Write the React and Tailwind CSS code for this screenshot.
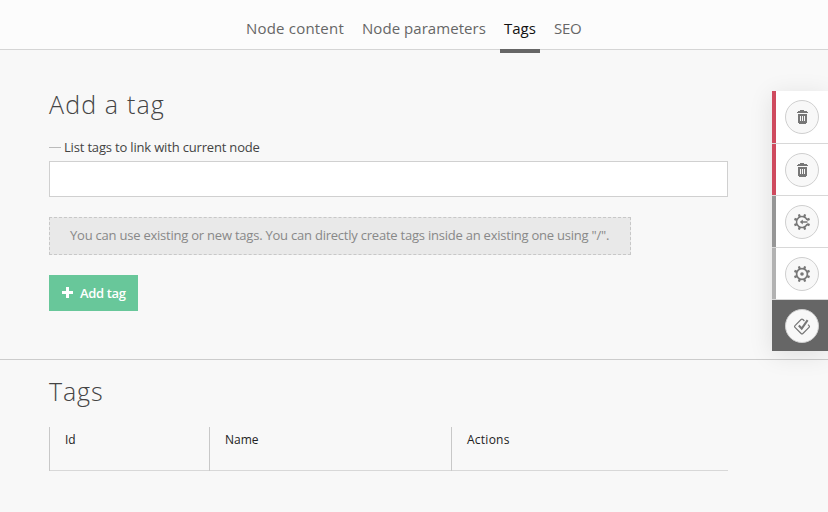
const teeth = [22.5, 67.5, 112.5, 157.5, 202.5, 247.5, 292.5, 337.5];

function Trash() {
  return (
    <svg width="12" height="14" viewBox="0 0 12 14" fill="#777" shapeRendering="crispEdges">
      <path d="M4 0h4v1h2.500v1H11.500v1H.5V2H1.500V1H4zM1.500 4h9v9h-1v1h-7v-1h-1z" />
      <path d="M4 6h1v5h-1zM6 6h1v5h-1zM8 6h1v5h-1z" fill="#f8f8f8" />
    </svg>
  );
}

function Gear({ arrow }) {
  return (
    <svg width="18" height="18" viewBox="0 0 18 18" fill="none" stroke="#777">
      {arrow ? (
        <path d="M14.100 6.900A5.500 5.500 0 1 0 14.100 11.100" strokeWidth="1.500" />
      ) : (
        <circle cx="9" cy="9" r="5.400" strokeWidth="1.700" />
      )}
      {teeth.map((a) => (
        <path key={a} d="M7.800 3.500L7.900 .8h2.200l.1 2.700z" fill="#777" stroke="none" transform={`rotate(${a} 9 9)`} />
      ))}
      {arrow ? (
        <path d="M6.800 9l3-2.400v1.700h4.700v1.400h-4.700v1.700z" fill="#777" stroke="none" />
      ) : (
        <circle cx="9" cy="9" r="1.800" fill="#777" stroke="none" />
      )}
    </svg>
  );
}

function Check() {
  return (
    <svg width="18" height="18" viewBox="0 0 18 18" fill="none" stroke="#777">
      <path d="M11.400 4L9.900 2.500a1.300 1.300 0 0 0-1.800 0L2 8.600a1.300 1.300 0 0 0 0 1.800l6.100 6.100a1.300 1.300 0 0 0 1.800 0l6.100-6.100a1.300 1.300 0 0 0 0-1.800l-1-1" strokeWidth="1.200" />
      <path d="M5.800 8.600l2.900 3 5.900-8.400" strokeWidth="2.100" />
    </svg>
  );
}

const Action = ({ children, className }) => (
  <button className={`flex w-full items-start pl-[9px] pt-[9px] border-l-4 ${className}`}>
    <span className="flex size-[34px] items-center justify-center rounded-full border border-[#cfcfcf] bg-[#f8f8f8]">{children}</span>
  </button>
);

export default function App() {
  return (
    <div className="relative flex h-[512px] w-[828px] flex-col overflow-hidden bg-[#f8f8f8] font-['Open_Sans',sans-serif] text-[#444]">
      <nav className="flex h-[50px] shrink-0 border-b border-[#d5d5d5] bg-[#fcfcfc] pl-[246px] text-[15px] leading-[20px] text-[#666]">
        <a className="mr-[18px] w-[98px] whitespace-nowrap pt-[18px] tracking-[0.2px]">Node content</a>
        <a className="mr-[14px] w-[124px] whitespace-nowrap pt-[18px] tracking-[0.05px]">Node parameters</a>
        <a className="mr-[14px] h-[53px] w-[40px] whitespace-nowrap border-b-4 border-[#666] pl-[4px] pt-[18px] text-[#111]">Tags</a>
        <a className="whitespace-nowrap pt-[18px] tracking-[-0.3px]">SEO</a>
      </nav>
      <section className="h-[310px] shrink-0 border-b border-[#ccc] pl-[49px] pt-[36px]">
        <h1 className="h-[36px] text-[25px] font-light leading-[36px] tracking-[1.15px]">Add a tag</h1>
        <label className="mt-[15px] flex h-[20px] items-center text-[13px] leading-[20px] tracking-[-0.175px]">
          <span className="mr-[3px] h-px w-[12px] bg-[#bbb]" />
          <span className="whitespace-nowrap">List tags to link with current node</span>
        </label>
        <div className="mt-[4px] h-[36px] w-[679px] border border-[#d0d0d0] bg-white" />
        <p className="mt-[20px] h-[38px] w-[582px] whitespace-nowrap border border-dashed border-[#c8c8c8] bg-[#e9e9e9] pl-[20px] text-[13px] leading-[35px] tracking-[-0.225px] text-[#888]">
          You can use existing or new tags. You can directly create tags inside an existing one using "/".
        </p>
        <button className="mt-[20px] flex h-[36px] w-[89px] items-center bg-[#68c79a] pl-[13px] text-[13px] font-semibold tracking-[-0.35px] text-white">
          <svg width="11" height="11" viewBox="0 0 11 11" className="mb-px mr-[7px]" stroke="#fff" strokeWidth="3"><path d="M5.500 0v11M0 5.500h11" /></svg>
          <span className="whitespace-nowrap pt-px">Add tag</span>
        </button>
      </section>
      <section className="pl-[49px] pt-[13px]">
        <h1 className="h-[36px] text-[25px] font-light leading-[36px] tracking-[0.85px]">Tags</h1>
        <div className="mt-[18px] flex h-[44px] w-[679px] border-b border-[#d8d8d8] text-[12px] leading-[26px] text-[#222]">
          <div className="h-[44px] w-[160px] border-l border-[#c8c8c8] pl-[15px]">Id</div>
          <div className="h-[44px] w-[242px] border-l border-[#c8c8c8] pl-[15px]">Name</div>
          <div className="h-[44px] border-l border-[#c8c8c8] pl-[15px] tracking-[0.25px]">Actions</div>
        </div>
      </section>
      <aside className="absolute left-[772px] top-[91px] w-[56px] bg-[#d8d8d8] shadow-[0_4px_24px_rgba(0,0,0,0.10)]">
        <Action className="mb-px h-[52px] border-[#cf4a5e] bg-white"><Trash /></Action>
        <Action className="mb-px h-[51px] border-[#cf4a5e] bg-white"><Trash /></Action>
        <Action className="mb-px h-[51px] border-[#969696] bg-white"><Gear arrow /></Action>
        <Action className="mb-px h-[51px] border-[#b2b2b2] bg-white"><Gear /></Action>
        <Action className="h-[51px] border-[#666] bg-[#666]"><Check /></Action>
      </aside>
    </div>
  );
}
